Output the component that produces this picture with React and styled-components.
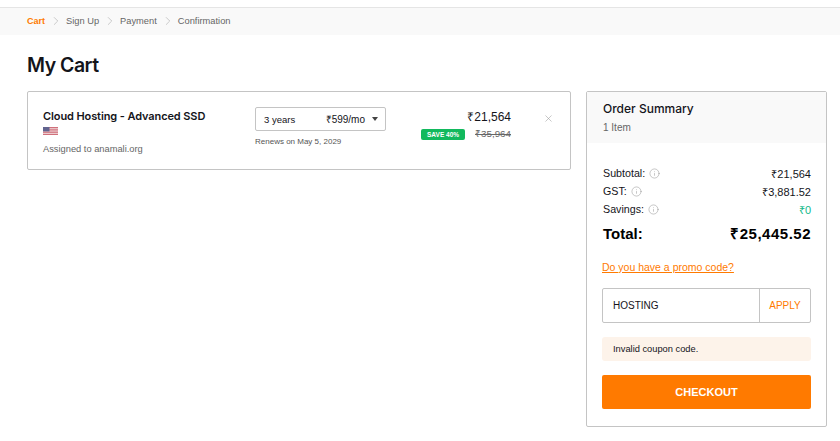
import styled, { createGlobalStyle } from 'styled-components';
import { ChevronRight, Info, X } from 'lucide-react';

const GlobalStyle = createGlobalStyle`
  * {
    box-sizing: border-box;
  }

  html, body {
    margin: 0;
    background: #fff;
    color: #14141a;
    font-family: 'Liberation Sans', Arial, sans-serif;
  }
`;

const steps = ['Cart', 'Sign Up', 'Payment', 'Confirmation'];

const totals = [
  { label: 'Subtotal:', value: '₹21,564' },
  { label: 'GST:', value: '₹3,881.52' },
  { label: 'Savings:', value: '₹0', green: true },
];

function UsFlag() {
  return (
    <FlagSvg viewBox="0 0 15 8" aria-hidden="true">
      <rect width="15" height="8" fill="#d0707b" />
      <rect y="1.2" width="15" height="1.1" fill="#efd5d8" />
      <rect y="3.5" width="15" height="1.1" fill="#efd5d8" />
      <rect y="5.8" width="15" height="1.1" fill="#efd5d8" />
      <rect width="6.5" height="4.4" fill="#62648f" />
    </FlagSvg>
  );
}

export default function App() {
  return (
    <Page>
      <GlobalStyle />
      <Breadcrumb>
        {steps.map((step, index) => (
          <Step key={step}>
            {index > 0 && <ChevronRight size={14} strokeWidth={1} color="#a9a9a9" />}
            <StepLabel $active={index === 0}>{step}</StepLabel>
          </Step>
        ))}
      </Breadcrumb>

      <Content>
        <Title>My Cart</Title>
        <Columns>
          <CartCard>
            <ItemInfo>
              <ItemName>Cloud Hosting - Advanced SSD</ItemName>
              <UsFlag />
              <Assigned>Assigned to anamali.org</Assigned>
            </ItemInfo>
            <TermColumn>
              <TermSelect>
                <span>3 years</span>
                <TermPrice>₹599/mo</TermPrice>
                <Caret />
              </TermSelect>
              <Renews>Renews on May 5, 2029</Renews>
            </TermColumn>
            <PriceColumn>
              <Price>₹21,564</Price>
              <SaveRow>
                <SaveBadge>SAVE 40%</SaveBadge>
                <OldPrice>₹35,964</OldPrice>
              </SaveRow>
            </PriceColumn>
            <RemoveButton type="button" aria-label="Remove">
              <X size={11} strokeWidth={1.2} color="#9a9a9a" />
            </RemoveButton>
          </CartCard>

          <Summary>
            <SummaryHead>
              <SummaryTitle>Order Summary</SummaryTitle>
              <ItemCount>1 Item</ItemCount>
            </SummaryHead>
            <SummaryBody>
              {totals.map((row) => (
                <TotalRow key={row.label}>
                  <TotalLabel>
                    {row.label}
                    <Info size={11} strokeWidth={1} color="#858585" />
                  </TotalLabel>
                  <TotalValue $green={row.green}>{row.value}</TotalValue>
                </TotalRow>
              ))}
              <GrandTotal>
                <span>Total:</span>
                <GrandValue>₹25,445.52</GrandValue>
              </GrandTotal>
              <PromoLink href="#promo">Do you have a promo code?</PromoLink>
              <PromoForm>
                <PromoInput defaultValue="HOSTING" />
                <ApplyButton type="button">APPLY</ApplyButton>
              </PromoForm>
              <CouponError>Invalid coupon code.</CouponError>
              <CheckoutButton type="button">CHECKOUT</CheckoutButton>
            </SummaryBody>
          </Summary>
        </Columns>
      </Content>
    </Page>
  );
}

const Page = styled.div`
  padding-top: 7px;
  height: 441px;
  overflow: hidden;
`;

const Breadcrumb = styled.nav`
  display: flex;
  align-items: center;
  height: 28px;
  padding: 0 27px 2px;
  background: #f9f9f9;
  border-top: 1px solid #e5e5e5;
  font-size: 9.3px;
`;

const Step = styled.div`
  display: flex;
  align-items: center;
  gap: 3px;
  margin-right: 4px;
`;

const StepLabel = styled.span`
  color: ${({ $active }) => ($active ? '#ff7a00' : '#666')};
  font-size: ${({ $active }) => ($active ? '9px' : 'inherit')};
  font-weight: ${({ $active }) => ($active ? 700 : 400)};
`;

const Content = styled.main`
  padding: 0 13px 0 27px;
`;

const Title = styled.h1`
  margin: 0;
  padding-top: 19px;
  height: 56px;
  font-family: Inter, 'Liberation Sans', sans-serif;
  font-size: 19.5px;
  line-height: 23px;
  font-weight: 600;
  letter-spacing: -0.5px;
`;

const Columns = styled.div`
  display: flex;
  align-items: flex-start;
  gap: 15px;
`;

const CartCard = styled.section`
  display: flex;
  align-items: flex-start;
  width: 544px;
  height: 79px;
  padding: 15px 15px;
  border: 1px solid #c4c4c4;
  border-radius: 2px;
`;

const ItemInfo = styled.div`
  width: 212px;
  display: flex;
  flex-direction: column;
  align-items: flex-start;
`;

const ItemName = styled.div`
  font-family: Inter, 'Liberation Sans', sans-serif;
  font-size: 11px;
  line-height: 18px;
  font-weight: 600;
  letter-spacing: -0.1px;
`;

const FlagSvg = styled.svg`
  display: block;
  width: 15px;
  height: 8px;
  margin-top: 2px;
`;

const Assigned = styled.div`
  margin-top: 8px;
  font-size: 9.3px;
  line-height: 13px;
  color: #666;
`;

const TermColumn = styled.div`
  width: 131px;
`;

const TermSelect = styled.div`
  display: flex;
  align-items: center;
  height: 24px;
  padding: 0 7px 0 8px;
  border: 1px solid #c4c4c4;
  border-radius: 2px;
  font-size: 9.5px;
`;

const TermPrice = styled.span`
  margin-left: auto;
  margin-right: 7px;
  font-size: 10px;
`;

const Caret = styled.i`
  width: 0;
  height: 0;
  border-left: 3px solid transparent;
  border-right: 3px solid transparent;
  border-top: 4px solid #444;
`;

const Renews = styled.div`
  margin-top: 5px;
  font-size: 8px;
  line-height: 11px;
  color: #555;
`;

const PriceColumn = styled.div`
  width: 125px;
  display: flex;
  flex-direction: column;
  align-items: flex-end;
`;

const Price = styled.div`
  margin-top: 1px;
  font-size: 12px;
  line-height: 18px;
`;

const SaveRow = styled.div`
  display: flex;
  align-items: flex-start;
  gap: 10px;
  margin-top: 3px;
`;

const SaveBadge = styled.span`
  display: inline-flex;
  align-items: center;
  justify-content: center;
  width: 44px;
  height: 11px;
  background: #12b95d;
  border-radius: 2px;
  color: #fff;
  font-size: 6.5px;
  font-weight: 700;
`;

const OldPrice = styled.span`
  font-size: 9.8px;
  line-height: 9px;
  color: #666;
  text-decoration: line-through;
`;

const RemoveButton = styled.button`
  display: flex;
  margin: 6px 0 0 31.5px;
  padding: 0;
  border: 0;
  background: none;
`;

const Summary = styled.aside`
  width: 241px;
  height: 336px;
  border: 1px solid #c4c4c4;
  border-radius: 2px;
`;

const SummaryHead = styled.header`
  height: 51px;
  padding: 9px 16px 0;
  background: #f9f9f9;
`;

const SummaryTitle = styled.div`
  font-family: Inter, 'Liberation Sans', sans-serif;
  font-size: 12px;
  line-height: 15px;
  font-weight: 500;
`;

const ItemCount = styled.div`
  margin-top: 5px;
  font-size: 10px;
  line-height: 13px;
  color: #666;
`;

const SummaryBody = styled.div`
  padding: 21px 15px 0 15px;
`;

const TotalRow = styled.div`
  display: flex;
  justify-content: space-between;
  align-items: center;
  height: 18px;
  padding-left: 1px;
  font-size: 11px;
`;

const TotalLabel = styled.span`
  display: flex;
  align-items: center;
  gap: 4px;
  font-size: 10.7px;
`;

const TotalValue = styled.span`
  color: ${({ $green }) => ($green ? '#12b98a' : 'inherit')};
`;

const GrandTotal = styled.div`
  display: flex;
  justify-content: space-between;
  margin-top: 7px;
  padding-left: 1px;
  font-size: 15px;
  line-height: 18px;
  font-weight: 700;
  color: #000;
`;

const GrandValue = styled.span`
  letter-spacing: 0.5px;
`;

const PromoLink = styled.a`
  display: block;
  margin-top: 17px;
  font-size: 10.5px;
  line-height: 14px;
  color: #ff7a00;
`;

const PromoForm = styled.div`
  display: flex;
  height: 35px;
  margin-top: 14px;
  border: 1px solid #c4c4c4;
  border-radius: 2px;
`;

const PromoInput = styled.input`
  flex: 1;
  min-width: 0;
  padding: 0 10px;
  border: 0;
  background: none;
  font-family: inherit;
  font-size: 10px;
  color: #14141a;
`;

const ApplyButton = styled.button`
  width: 51px;
  padding: 0;
  border: 0;
  border-left: 1px solid #c4c4c4;
  background: none;
  font-family: inherit;
  font-size: 10px;
  color: #ff7a00;
`;

const CouponError = styled.div`
  height: 24px;
  margin-top: 14px;
  padding: 0 11px;
  background: #fdf3ea;
  border-radius: 3px;
  font-size: 9.3px;
  line-height: 24px;
`;

const CheckoutButton = styled.button`
  display: block;
  width: 100%;
  height: 34px;
  margin-top: 14px;
  padding: 0;
  border: 0;
  border-radius: 2px;
  background: #ff7a00;
  color: #fff;
  font-family: inherit;
  font-size: 11px;
  font-weight: 700;
`;
